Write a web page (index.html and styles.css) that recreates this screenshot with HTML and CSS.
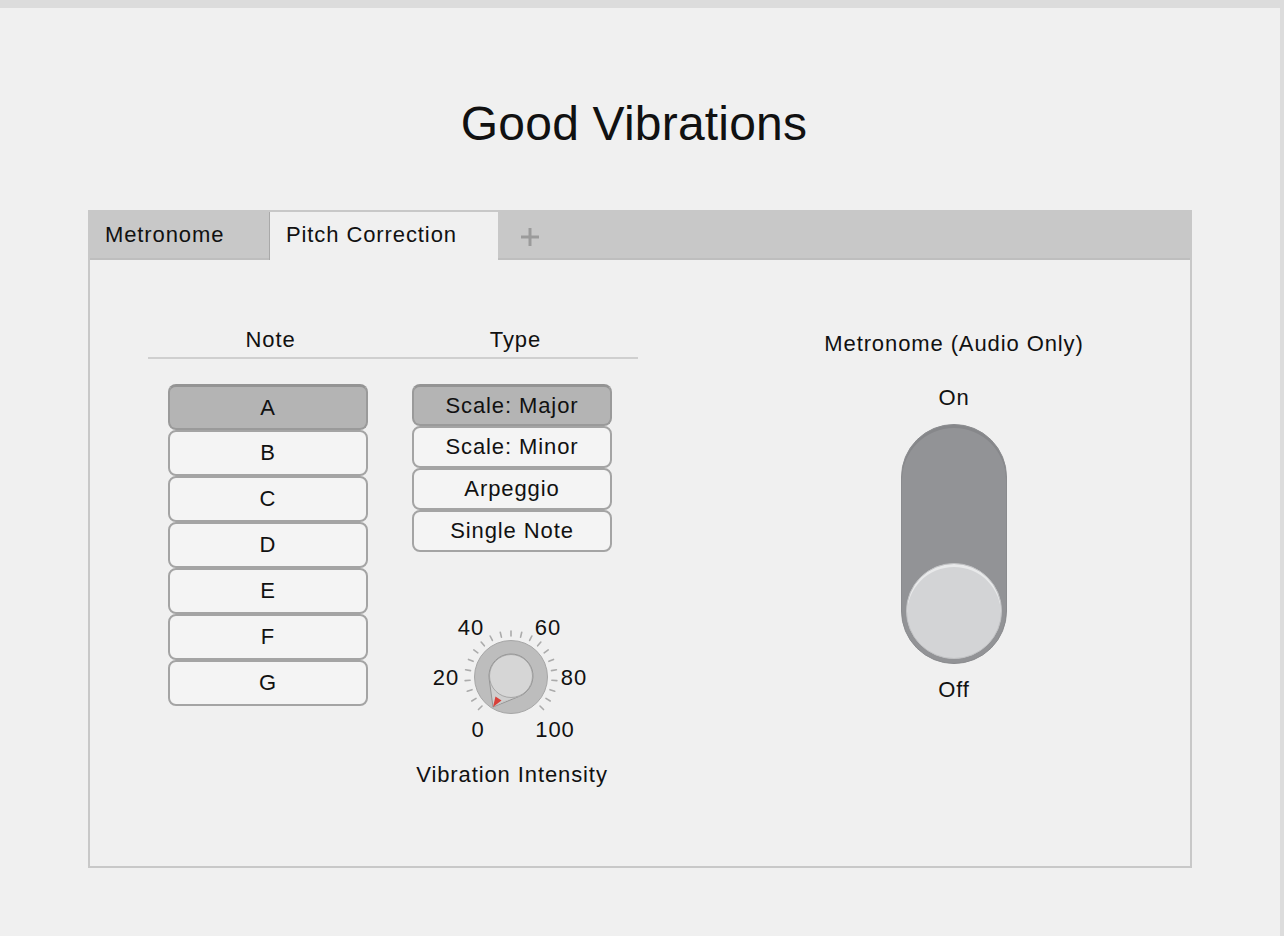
FILE: index.html
```html
<!DOCTYPE html>
<html>
<head>
<meta charset="utf-8">
<title>Good Vibrations</title>
<link rel="stylesheet" href="styles.css">
</head>
<body>
<div class="topbar"></div>
<div class="page">
  <main class="main">
    <h1 class="title">Good Vibrations</h1>
    <section class="panel">
      <div class="tabs">
        <div class="tab">Metronome</div>
        <div class="tab tab-active">Pitch Correction</div>
        <div class="tab-add">
          <svg width="20" height="20" viewBox="0 0 20 20"><path d="M10 2V20M1 11H19" stroke="#9b9b9b" stroke-width="3" fill="none"/></svg>
        </div>
      </div>
      <div class="content">
        <div class="pitch">
          <div class="headers">
            <div>Note</div>
            <div>Type</div>
          </div>
          <div class="cols">
            <div class="col col-notes">
              <div class="btn note sel">A</div>
              <div class="btn note">B</div>
              <div class="btn note">C</div>
              <div class="btn note">D</div>
              <div class="btn note">E</div>
              <div class="btn note">F</div>
              <div class="btn note">G</div>
            </div>
            <div class="col col-types">
              <div class="btn type sel">Scale: Major</div>
              <div class="btn type">Scale: Minor</div>
              <div class="btn type">Arpeggio</div>
              <div class="btn type">Single Note</div>
              <svg class="dial" width="200" height="140" viewBox="0 0 200 140">
                <g stroke="#ababab" stroke-width="1.6" stroke-linecap="round" id="ticks"></g>
                <circle cx="99" cy="68" r="36.5" fill="#bdbdbd" stroke="#a6a6a6" stroke-width="1"/>
                <path d="M77.2 70.1 L81 98 L107.2 87.4 A22 22 0 1 0 77.2 70.1 Z" fill="#cfcfcf" stroke="#8f8f8f" stroke-width="0.9"/>
                <path d="M81 98 L92 92 L107.2 87.4 L112 84 Z" fill="#c4c4c4" stroke="none"/>
                <circle cx="99" cy="67" r="21.5" fill="#d6d6d6" stroke="#9a9a9a" stroke-width="0.8"/>
                <polygon points="81,98 83.5,87.5 89.5,91.5" fill="#d8413a"/>
                <g class="dial-num" text-anchor="middle" dominant-baseline="central">
                  <text x="66" y="120">0</text>
                  <text x="34" y="68">20</text>
                  <text x="59" y="18">40</text>
                  <text x="136" y="18">60</text>
                  <text x="162" y="68">80</text>
                  <text x="143" y="120">100</text>
                </g>
              </svg>
              <div class="dial-label">Vibration Intensity</div>
            </div>
          </div>
        </div>
        <div class="metro">
          <div class="metro-title">Metronome (Audio Only)</div>
          <div class="metro-on">On</div>
          <div class="switch"><div class="switch-knob"></div></div>
          <div class="metro-off">Off</div>
        </div>
      </div>
    </section>
  </main>
  <div class="scroll"></div>
</div>
<script>
  (function () {
    var g = document.getElementById('ticks');
    var ns = 'http://www.w3.org/2000/svg';
    for (var i = 0; i <= 20; i++) {
      var a = (-135 + i * 13.5) * Math.PI / 180;
      var s = Math.sin(a), c = Math.cos(a);
      var l = document.createElementNS(ns, 'line');
      l.setAttribute('x1', (99 + 41 * s).toFixed(2));
      l.setAttribute('y1', (68 - 41 * c).toFixed(2));
      l.setAttribute('x2', (99 + 46 * s).toFixed(2));
      l.setAttribute('y2', (68 - 46 * c).toFixed(2));
      g.appendChild(l);
    }
  })();
</script>
</body>
</html>
```

FILE: styles.css
```css
html, body {
  margin: 0;
  padding: 0;
}
body {
  background: #f0f0f0;
  font-family: "Liberation Sans", Arial, sans-serif;
  color: #111;
  font-size: 22px;
  letter-spacing: 0.9px;
}
.topbar {
  height: 8px;
  background: #dcdcdc;
}
.page {
  display: flex;
  min-height: 928px;
}
.main {
  flex: 1;
}
.scroll {
  width: 4px;
  background: #dcdcdc;
}
.title {
  margin: 0;
  padding: 88px 12px 0 0;
  font-size: 48px;
  line-height: 56px;
  font-weight: 400;
  letter-spacing: 0.2px;
  text-align: center;
}
.panel {
  margin: 58px 88px 0 88px;
  border: 2px solid #c8c8c8;
}
.tabs {
  display: flex;
  height: 46px;
  background: #c8c8c8;
  border-bottom: 2px solid #bebebe;
}
.tab {
  box-sizing: border-box;
  width: 179px;
  padding-left: 15px;
  line-height: 46px;
}
.tab-active {
  width: 229px;
  height: 48px;
  padding-left: 16px;
  margin-bottom: -2px;
  background: #f0f0f0;
  border-left: 1px solid #a9a9a9;
}
.tab-add {
  margin-left: 22px;
  padding-top: 14px;
}
.content {
  display: flex;
  box-sizing: border-box;
  height: 606px;
  padding-top: 67px;
}
.pitch {
  margin-left: 58px;
  width: 490px;
}
.headers {
  display: grid;
  grid-template-columns: 245px 245px;
  text-align: center;
  line-height: 26px;
  padding-bottom: 4px;
  border-bottom: 2px solid #cfcfcf;
}
.cols {
  display: grid;
  grid-template-columns: 245px 245px;
  margin-top: 25px;
}
.col-notes {
  padding-left: 20px;
}
.col-types {
  padding-left: 19px;
}
.btn {
  box-sizing: border-box;
  width: 200px;
  border: 2px solid #a4a4a4;
  border-radius: 8px;
  background: #f4f4f4;
  text-align: center;
}
.note {
  height: 46px;
  line-height: 42px;
}
.type {
  height: 42px;
  line-height: 38px;
}
.sel {
  background: #b4b4b4;
  border-color: #9a9a9a;
  border-top: 3px solid #949494;
}
.note.sel {
  line-height: 41px;
}
.type.sel {
  line-height: 37px;
}
.dial {
  display: block;
  margin-top: 57px;
}
.dial-num {
  font-family: "Liberation Sans", Arial, sans-serif;
  font-size: 22px;
  letter-spacing: 0.9px;
  fill: #111;
}
.dial-label {
  width: 200px;
  margin-top: 13px;
  text-align: center;
  line-height: 26px;
}
.metro {
  margin-left: 80px;
  flex: 1;
  display: flex;
  flex-direction: column;
  align-items: center;
  padding-top: 4px;
}
.metro-title,
.metro-on,
.metro-off {
  line-height: 26px;
}
.metro-on {
  margin-top: 28px;
}
.switch {
  position: relative;
  box-sizing: border-box;
  margin-top: 13px;
  width: 106px;
  height: 240px;
  border-radius: 53px;
  background: #929396;
  border: 1px solid #8a8b8e;
  box-shadow: inset 0 3px 0 #86878a;
}
.switch-knob {
  position: absolute;
  left: 4px;
  bottom: 4px;
  box-sizing: border-box;
  width: 96px;
  height: 96px;
  border-radius: 50%;
  background: #d3d4d6;
  border: 1px solid #c2c3c5;
  box-shadow: inset 0 3px 0 #e8e9ea;
}
.metro-off {
  margin-top: 13px;
}
```
